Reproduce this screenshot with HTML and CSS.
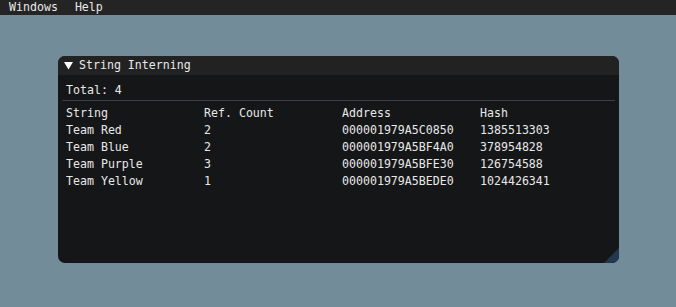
FILE: index.html
```html
<!DOCTYPE html>
<html>
  <head>
    <meta charset="utf-8">
    <title>String Interning</title>
    <link rel="stylesheet" href="styles.css">
  </head>
  <body>
    <nav class="menubar">
      <span class="menu-item">Windows</span>
      <span class="menu-item">Help</span>
    </nav>

    <main class="desktop">
      <section class="window">
        <header class="title-bar">
          <svg class="collapse-arrow" width="9" height="9" viewBox="0 0 9 9">
            <polygon points="0,1 9,1 4.5,8.5" fill="#ffffff"/>
          </svg>
          <span>String Interning</span>
        </header>

        <div class="window-body">
          <div class="line">Total: 4</div>
          <div class="separator"></div>

          <div class="intern-table">
            <span>String</span>
            <span>Ref. Count</span>
            <span>Address</span>
            <span>Hash</span>

            <span>Team Red</span>
            <span>2</span>
            <span>000001979A5C0850</span>
            <span>1385513303</span>

            <span>Team Blue</span>
            <span>2</span>
            <span>000001979A5BF4A0</span>
            <span>378954828</span>

            <span>Team Purple</span>
            <span>3</span>
            <span>000001979A5BFE30</span>
            <span>126754588</span>

            <span>Team Yellow</span>
            <span>1</span>
            <span>000001979A5BEDE0</span>
            <span>1024426341</span>
          </div>
        </div>

        <svg class="resize-grip" width="16" height="16" viewBox="0 0 16 16">
          <path d="M16 1 L16 9 Q16 16 9 16 L1 16 Z" fill="#213850"/>
        </svg>
      </section>
    </main>
  </body>
</html>
```

FILE: styles.css
```css
* {
  box-sizing: border-box;
}

body {
  margin: 0;
  padding: 0;
  background-color: #728c99;
  font-family: 'DejaVu Sans Mono', 'Liberation Mono', monospace;
  font-size: 11.6px;
  line-height: 13px;
  color: #e8e8e8;
}

.menubar {
  display: flex;
  gap: 1px;
  height: 15px;
  padding-left: 1px;
  background-color: #242424;
  line-height: 14px;
}

.menu-item {
  padding: 0 8px;
}

.desktop {
  padding: 41px 0 0 58px;
}

.window {
  position: relative;
  width: 561px;
  height: 207px;
  border-radius: 7px;
  background-color: #151617;
  overflow: hidden;
}

.title-bar {
  display: flex;
  align-items: center;
  height: 19px;
  padding: 3px 0 3px 6px;
  background-color: #222222;
}

.collapse-arrow {
  margin-right: 6px;
}

.window-body {
  padding: 8px;
}

.line {
  margin-top: 1px;
}

.separator {
  height: 1px;
  margin: 3px -4px 6px;
  background-color: #3d3d45;
}

.intern-table {
  display: grid;
  grid-template-columns: 138px 138px 138px 1fr;
  grid-auto-rows: 17px;
  white-space: pre;
}

.resize-grip {
  position: absolute;
  right: 0;
  bottom: 0;
}
```
